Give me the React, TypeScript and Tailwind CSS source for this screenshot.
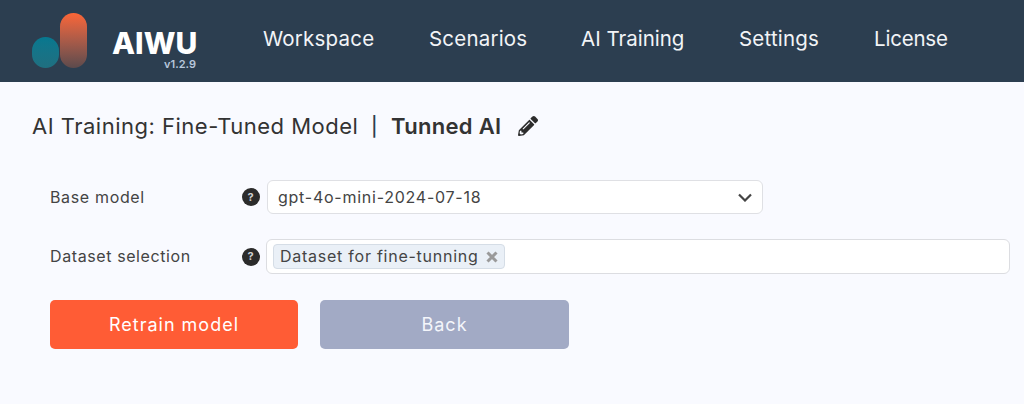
const font = { fontFamily: "Inter, 'Noto Sans', sans-serif" };

function Help() {
  return (
    <span className="flex h-[18px] w-[18px] items-center justify-center rounded-full bg-[#2b2b2b] text-[11px] font-bold leading-none text-[#d0d0d0]">?</span>
  );
}

function PencilIcon() {
  return (
    <svg width="20" height="20" viewBox="0 0 512 512" fill="#2c2c2c" aria-hidden="true">
      <path d="M497.9 142.1l-46.1 46.1c-4.7 4.7-12.3 4.7-17 0l-111-111c-4.7-4.7-4.7-12.3 0-17l46.1-46.1c18.7-18.7 49.1-18.7 67.9 0l60.1 60.1c18.8 18.7 18.8 49.1 0 67.9zM284.2 99.8L21.6 362.4.4 483.9c-2.9 16.4 11.4 30.6 27.8 27.8l121.5-21.3 262.6-262.6c4.7-4.7 4.7-12.3 0-17l-111-111c-4.8-4.7-12.4-4.7-17.1 0zM124.1 339.9c-5.5-5.5-5.5-14.3 0-19.8l154-154c5.5-5.5 14.3-5.5 19.8 0s5.5 14.3 0 19.8l-154 154c-5.5 5.5-14.3 5.5-19.8 0zM88 424h48v36.3l-64.5 11.3-31.1-31.1L51.7 376H88v48z" />
    </svg>
  );
}

export default function App() {
  return (
    <div className="flex h-[404px] w-[1024px] flex-col overflow-hidden bg-[#f9faff]" style={font}>
      <header className="flex h-[82px] shrink-0 items-center bg-[#2c3e50]">
        <div className="flex h-full w-[263px] shrink-0 items-start pl-[32px]">
          <div className="mt-[37px] h-[31px] w-[27px] rounded-full bg-gradient-to-b from-[#06788f] to-[#1f6f80]" />
          <div className="ml-[1px] mt-[13px] h-[55px] w-[27px] rounded-full bg-gradient-to-b from-[#fb6536] to-[#5c4a4c]" />
          <div className="ml-[25px] mt-[28px] flex w-[86px] flex-col items-end">
            <span className="w-full text-[30px] font-extrabold leading-[30px] text-white">AIWU</span>
            <span className="mr-[2px] mt-[1px] text-[11px] font-semibold leading-[10px] text-[#b8c7dc]">v1.2.9</span>
          </div>
        </div>
        <nav className="mt-[-3px] flex items-center text-[20.5px] leading-none text-[#f2f4f7]">
          <span className="w-[111px] whitespace-nowrap tracking-[0.2px]">Workspace</span>
          <span className="ml-[55px] w-[97px] whitespace-nowrap tracking-[0.2px]">Scenarios</span>
          <span className="ml-[55px] w-[103px] whitespace-nowrap tracking-[0px]">AI Training</span>
          <span className="ml-[55px] w-[80px] whitespace-nowrap tracking-[0.2px]">Settings</span>
          <span className="ml-[55px] w-[73px] whitespace-nowrap tracking-[-0.2px]">License</span>
        </nav>
      </header>

      <main className="flex flex-col pl-[32px]">
        <div className="mt-[30px] flex h-[28px] items-center text-[22px] leading-none tracking-[0.5px] text-[#333]">
          <span className="w-[326px] whitespace-nowrap">AI Training: Fine-Tuned Model</span>
          <span className="ml-[13px] w-[5px] text-[19px] font-medium text-[#2c3e50]">|</span>
          <span className="ml-[15px] w-[110px] whitespace-nowrap font-semibold tracking-[0.3px]">Tunned AI</span>
          <span className="ml-[17px]"><PencilIcon /></span>
        </div>

        <div className="ml-[18px] mt-[40px] flex h-[34px] items-center text-[16px] tracking-[0.65px] text-[#444]">
          <span className="w-[192px] pb-[1px]">Base model</span>
          <Help />
          <div className="ml-[7px] flex h-[34px] w-[496px] items-center justify-between rounded-[6px] border border-[#dfe0e4] bg-white pl-[10px] pr-[10px] tracking-[0.75px] text-[#444]">
            <span>gpt-4o-mini-2024-07-18</span>
            <svg width="14" height="9" viewBox="0 0 14 9" fill="none" stroke="#444" strokeWidth="2.2" aria-hidden="true"><path d="M1 1.5l6 6 6-6" /></svg>
          </div>
        </div>

        <div className="ml-[18px] mt-[25px] flex h-[35px] items-center text-[16px] tracking-[0.6px] text-[#444]">
          <span className="w-[192px] pb-[2px]">Dataset selection</span>
          <Help />
          <div className="ml-[6px] flex h-[35px] w-[744px] items-center rounded-[6px] border border-[#dcdde1] bg-white pl-[6px]">
            <span className="flex h-[25px] items-center gap-[7px] rounded-[4px] border border-[#d5dde6] bg-[#eaf0f7] pb-[1px] pl-[6px] pr-[6px] tracking-[0.75px] text-[#444]">
              Dataset for fine-tunning
              <svg className="mt-[1px]" width="12" height="12" viewBox="0 0 12 12" stroke="#9a9a9a" strokeWidth="3" aria-hidden="true"><path d="M1.5 1.5l9 9M10.5 1.5l-9 9" /></svg>
            </span>
          </div>
        </div>

        <div className="ml-[18px] mt-[26px] flex gap-[22px] text-[18px] tracking-[1px]">
          <button className="h-[49px] w-[248px] rounded-[5px] bg-[#ff5c35] text-[#fff]">Retrain model</button>
          <button className="h-[49px] w-[249px] rounded-[5px] bg-[#a2aac5] text-[#f4f6fb]">Back</button>
        </div>
      </main>
    </div>
  );
}
